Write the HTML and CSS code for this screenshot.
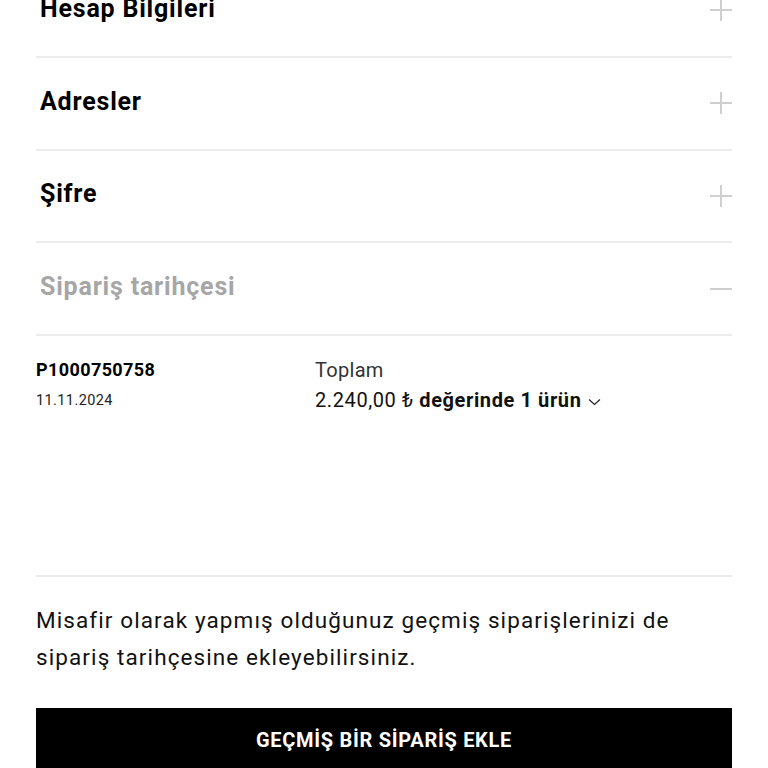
FILE: index.html
```html
<!DOCTYPE html>
<html lang="tr">
<head>
<meta charset="utf-8">
<link rel="stylesheet" href="styles.css">
</head>
<body>
<div class="page">
  <div class="acc first">
    <div class="acc-head"><span class="title">Hesap Bilgileri</span><span class="icon plus"></span></div>
  </div>
  <div class="acc">
    <div class="acc-head"><span class="title">Adresler</span><span class="icon plus"></span></div>
  </div>
  <div class="acc">
    <div class="acc-head"><span class="title">Şifre</span><span class="icon plus"></span></div>
  </div>
  <div class="acc open">
    <div class="acc-head"><span class="title muted">Sipariş tarihçesi</span><span class="icon minus"></span></div>
  </div>
  <div class="order">
    <div class="order-id">
      <div class="num">P1000750758</div>
      <div class="date">11.11.2024</div>
    </div>
    <div class="order-total">
      <div class="label">Toplam</div>
      <div class="value">2.240,00 ₺ <b>değerinde 1 ürün</b>
        <svg class="chev" width="13" height="8" viewBox="0 0 13 8"><path d="M1 1.5 L6.5 6.5 L12 1.5" fill="none" stroke="#222" stroke-width="1.2"/></svg>
      </div>
    </div>
  </div>
  <p class="note">Misafir olarak yapmış olduğunuz geçmiş siparişlerinizi de sipariş tarihçesine ekleyebilirsiniz.</p>
  <button class="btn">GEÇMİŞ BİR SİPARİŞ EKLE</button>
</div>
</body>
</html>
```
FILE: styles.css
```css
html, body { margin: 0; padding: 0; background: #fff; }
body { font-family: Roboto, "Liberation Sans", sans-serif; color: #000; overflow: hidden; height: 768px; }
.page { padding: 0 36px; margin-top: -35px; }
.acc { border-bottom: 2px solid #ececec; }
.acc-head { height: 90.8px; display: flex; align-items: center; justify-content: space-between; padding-left: 4px; }
.title { font-size: 25px; font-weight: 700; letter-spacing: 0.8px; position: relative; top: -2px; }
.title.muted { color: #a6a6a6; }
.icon { width: 22px; height: 22px; position: relative; }
.icon::before, .icon::after { content: ""; position: absolute; background: #cfcfcf; }
.icon::before { left: 0; right: 0; top: 10px; height: 2px; }
.plus::after { top: 0; bottom: 0; left: 10px; width: 2px; }
.minus::after { display: none; }
.order { display: flex; height: 241px; border-bottom: 2px solid #ececec; padding-top: 22px; box-sizing: border-box; }
.order-id { width: 279px; }
.num { font-size: 18px; font-weight: 700; line-height: 24px; letter-spacing: 0.4px; }
.date { font-size: 14.5px; color: #222; margin-top: 10px; letter-spacing: 0.4px; }
.label { font-size: 20px; color: #333; line-height: 24px; letter-spacing: 0.3px; }
.value { font-size: 20px; line-height: 30px; margin-top: 3px; color: #111; letter-spacing: 0.6px; }
.value b { font-weight: 700; }
.chev { vertical-align: middle; margin-left: 1px; }
.note { font-size: 22.5px; line-height: 37px; margin: 25px 0 0; color: #111; letter-spacing: 1.1px; }
.btn { display: block; width: 100%; height: 64px; margin-top: 32px; background: #000; color: #fff; border: 0; font-family: Roboto, sans-serif; font-weight: 700; font-size: 20px; letter-spacing: 0.7px; }
```
